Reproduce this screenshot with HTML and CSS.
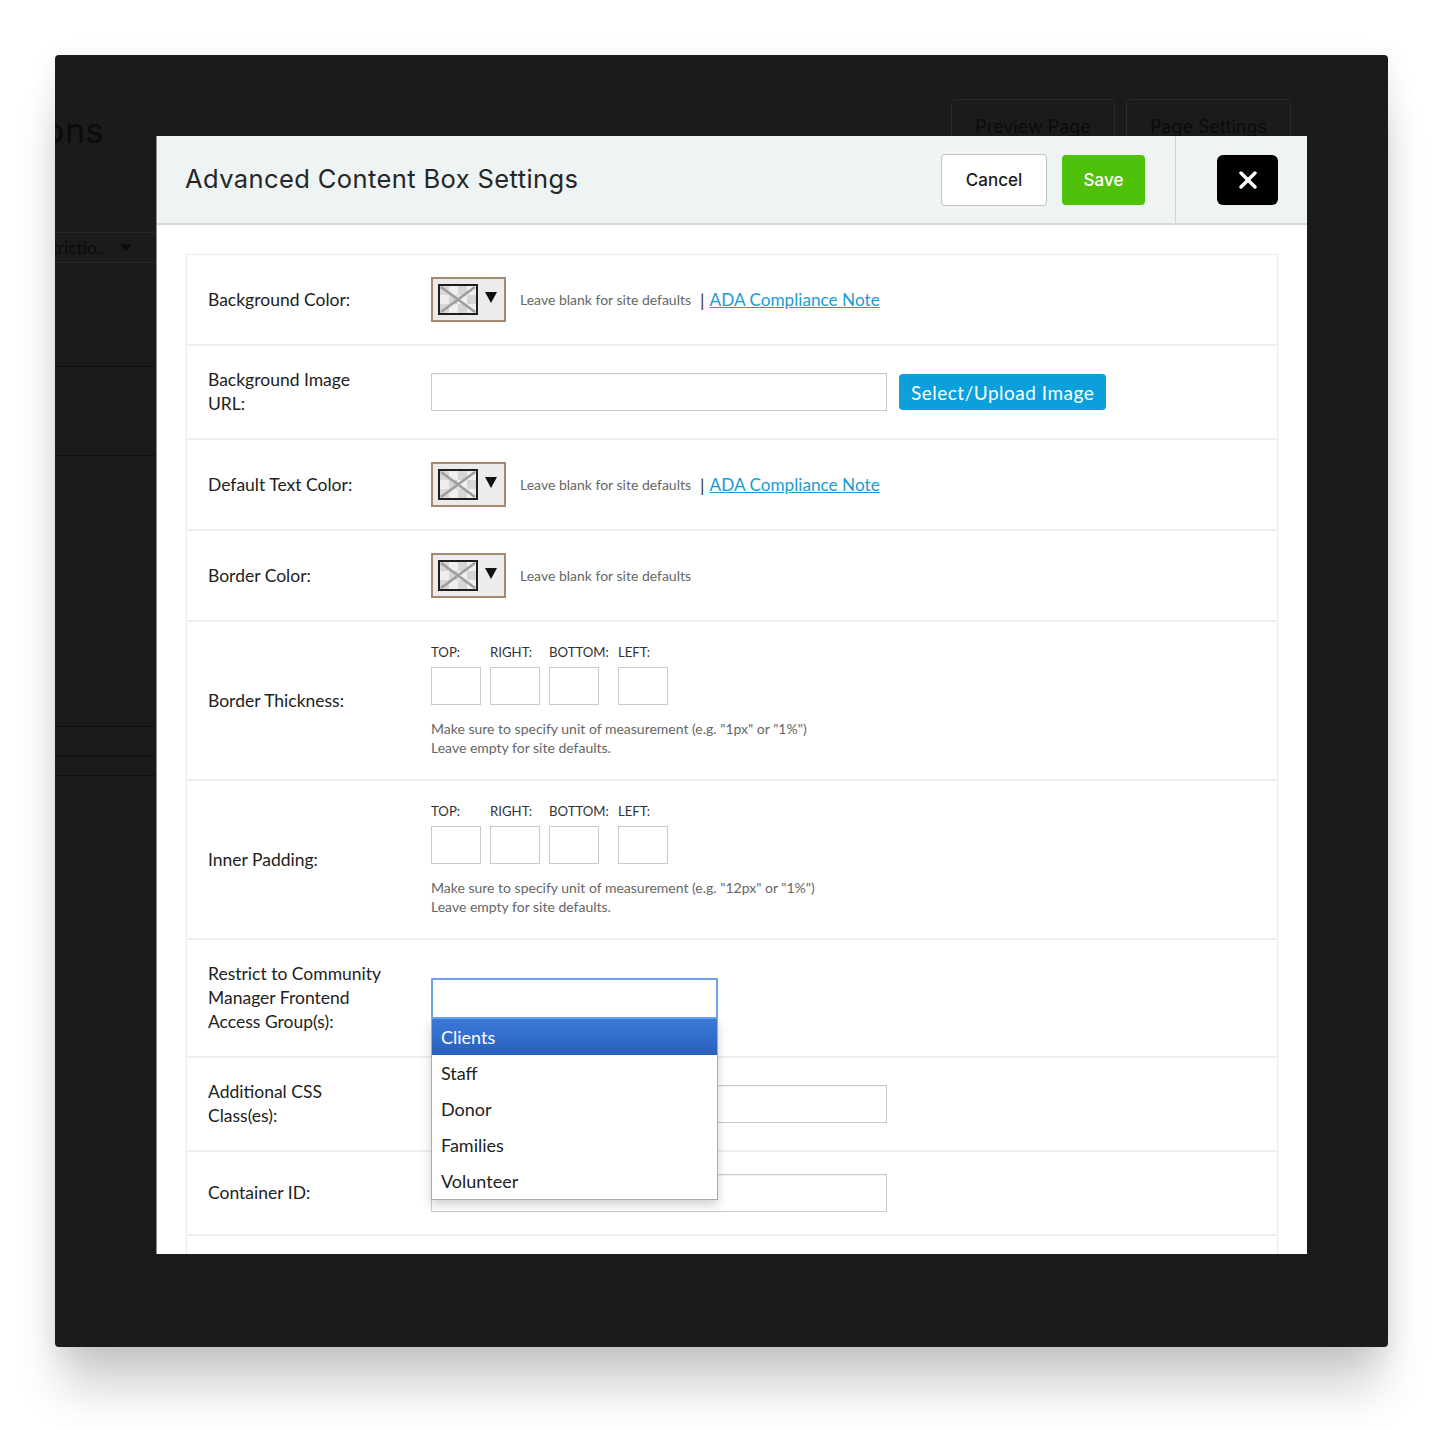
FILE: index.html
```html
<!DOCTYPE html>
<html lang="en">
<head>
    <meta charset="UTF-8">
    <meta name="viewport" content="width=device-width, initial-scale=1.0">
    <title>Advanced Content Box Settings</title>
    <link rel="stylesheet" href="styles.css">
</head>
<body>
    <div class="screen">
        <!-- page underneath the overlay -->
        <div class="bg-page">
            <div class="bg-top">
                <div class="bg-title">ons</div>
                <div class="bg-actions">
                    <span class="bg-btn">Preview Page</span>
                    <span class="bg-btn">Page Settings</span>
                </div>
            </div>
            <div class="bg-filter">
                <span class="bg-filter-text">trictio...</span>
                <span class="bg-caret"></span>
            </div>
            <div class="bg-row bg-row-1"></div>
            <div class="bg-row bg-row-2"></div>
            <div class="bg-row bg-row-3"></div>
            <div class="bg-row bg-row-4"></div>
            <div class="bg-row bg-row-5"></div>
        </div>

        <div class="modal">
            <div class="modal-header">
                <h1 class="modal-title">Advanced Content Box Settings</h1>
                <button class="btn btn-cancel">Cancel</button>
                <button class="btn btn-save">Save</button>
                <div class="header-divider"></div>
                <button class="btn-close" aria-label="Close">
                    <svg width="18" height="18" viewBox="0 0 18 18">
                        <path d="M2 2 L16 16 M16 2 L2 16" stroke="#fff" stroke-width="3.4" stroke-linecap="round"/>
                    </svg>
                </button>
            </div>

            <div class="modal-body">
                <div class="form-table">
                    <div class="form-row">
                        <div class="form-label">Background Color:</div>
                        <div class="form-field">
                            <span class="picker">
                                <span class="swatch">
                                    <svg width="36" height="27" viewBox="0 0 36 27">
                                        <rect width="36" height="27" fill="#efefef"/>
                                        <path d="M0 0h9v9H0z M18 0h9v9h-9z M9 9h9v9H9z M27 9h9v9h-9z M0 18h9v9H0z M18 18h9v9h-9z" fill="#d6d6d6"/>
                                        <path d="M1 1 L35 26 M35 1 L1 26" stroke="#9e9e9e" stroke-width="2.6"/>
                                    </svg>
                                </span>
                                <svg class="caret" width="12" height="12" viewBox="0 0 12 12"><path d="M0 1 H12 L6 12 Z" fill="#111"/></svg>
                            </span>
                            <span class="hint">Leave blank for site defaults</span>
                            <span class="pipe">|</span>
                            <a class="ada-link" href="#">ADA Compliance Note</a>
                        </div>
                    </div>

                    <div class="form-row">
                        <div class="form-label">Background Image<br>URL:</div>
                        <div class="form-field">
                            <input class="text-input" type="text">
                            <button class="btn-upload">Select/Upload Image</button>
                        </div>
                    </div>

                    <div class="form-row">
                        <div class="form-label">Default Text Color:</div>
                        <div class="form-field">
                            <span class="picker">
                                <span class="swatch">
                                    <svg width="36" height="27" viewBox="0 0 36 27">
                                        <rect width="36" height="27" fill="#efefef"/>
                                        <path d="M0 0h9v9H0z M18 0h9v9h-9z M9 9h9v9H9z M27 9h9v9h-9z M0 18h9v9H0z M18 18h9v9h-9z" fill="#d6d6d6"/>
                                        <path d="M1 1 L35 26 M35 1 L1 26" stroke="#9e9e9e" stroke-width="2.6"/>
                                    </svg>
                                </span>
                                <svg class="caret" width="12" height="12" viewBox="0 0 12 12"><path d="M0 1 H12 L6 12 Z" fill="#111"/></svg>
                            </span>
                            <span class="hint">Leave blank for site defaults</span>
                            <span class="pipe">|</span>
                            <a class="ada-link" href="#">ADA Compliance Note</a>
                        </div>
                    </div>

                    <div class="form-row">
                        <div class="form-label">Border Color:</div>
                        <div class="form-field">
                            <span class="picker">
                                <span class="swatch">
                                    <svg width="36" height="27" viewBox="0 0 36 27">
                                        <rect width="36" height="27" fill="#efefef"/>
                                        <path d="M0 0h9v9H0z M18 0h9v9h-9z M9 9h9v9H9z M27 9h9v9h-9z M0 18h9v9H0z M18 18h9v9h-9z" fill="#d6d6d6"/>
                                        <path d="M1 1 L35 26 M35 1 L1 26" stroke="#9e9e9e" stroke-width="2.6"/>
                                    </svg>
                                </span>
                                <svg class="caret" width="12" height="12" viewBox="0 0 12 12"><path d="M0 1 H12 L6 12 Z" fill="#111"/></svg>
                            </span>
                            <span class="hint">Leave blank for site defaults</span>
                        </div>
                    </div>

                    <div class="form-row">
                        <div class="form-label">Border Thickness:</div>
                        <div class="form-field sides">
                            <div class="side-group">
                                <label class="side"><span class="side-name">TOP:</span><input class="side-input" type="text"></label>
                                <label class="side"><span class="side-name">RIGHT:</span><input class="side-input" type="text"></label>
                                <label class="side"><span class="side-name">BOTTOM:</span><input class="side-input" type="text"></label>
                                <label class="side"><span class="side-name">LEFT:</span><input class="side-input" type="text"></label>
                            </div>
                            <p class="side-help">Make sure to specify unit of measurement (e.g. "1px" or "1%")<br>Leave empty for site defaults.</p>
                        </div>
                    </div>

                    <div class="form-row">
                        <div class="form-label">Inner Padding:</div>
                        <div class="form-field sides">
                            <div class="side-group">
                                <label class="side"><span class="side-name">TOP:</span><input class="side-input" type="text"></label>
                                <label class="side"><span class="side-name">RIGHT:</span><input class="side-input" type="text"></label>
                                <label class="side"><span class="side-name">BOTTOM:</span><input class="side-input" type="text"></label>
                                <label class="side"><span class="side-name">LEFT:</span><input class="side-input" type="text"></label>
                            </div>
                            <p class="side-help">Make sure to specify unit of measurement (e.g. "12px" or "1%")<br>Leave empty for site defaults.</p>
                        </div>
                    </div>

                    <div class="form-row">
                        <div class="form-label">Restrict to Community<br>Manager Frontend<br>Access Group(s):</div>
                        <div class="form-field">
                            <div class="multi-select">
                                <div class="multi-box"></div>
                                <ul class="multi-list">
                                    <li class="active">Clients</li>
                                    <li>Staff</li>
                                    <li>Donor</li>
                                    <li>Families</li>
                                    <li>Volunteer</li>
                                </ul>
                            </div>
                        </div>
                    </div>

                    <div class="form-row">
                        <div class="form-label">Additional CSS<br>Class(es):</div>
                        <div class="form-field">
                            <input class="text-input" type="text">
                        </div>
                    </div>

                    <div class="form-row">
                        <div class="form-label">Container ID:</div>
                        <div class="form-field">
                            <input class="text-input" type="text">
                        </div>
                    </div>

                    <div class="form-row">
                        <div class="form-label">&nbsp;</div>
                        <div class="form-field">
                            <input class="text-input" type="text">
                        </div>
                    </div>
                </div>
            </div>
        </div>
    </div>
</body>
</html>
```

FILE: styles.css
```css
* {
    margin: 0;
    padding: 0;
    box-sizing: border-box;
}

html,
body {
    min-height: 1430px;
}

body {
    font-family: Lato, 'Noto Sans', sans-serif;
    background-color: #fff;
    color: #222;
    padding: 55px 0 0 55px;
}

.screen {
    position: relative;
    width: 1333px;
    height: 1292px;
    background-color: #1b1b1b;
    border-radius: 4px;
    overflow: hidden;
    box-shadow: 0 48px 45px -8px rgba(0, 0, 0, 0.19), 0 6px 28px rgba(0, 0, 0, 0.09);
}

/* page under the overlay */
.bg-page {
    padding: 44px 97px 0 0;
    color: #0b0b0b;
    font-family: Inter, sans-serif;
}

.bg-top {
    display: flex;
    justify-content: space-between;
    align-items: flex-start;
}

.bg-title {
    font-size: 34px;
    line-height: 44px;
    margin: 10px 0 0 -11px;
    letter-spacing: 0.5px;
}

.bg-actions {
    display: flex;
    gap: 11px;
}

.bg-btn {
    display: flex;
    align-items: center;
    height: 54px;
    padding: 2px 23px 0;
    border: 1px solid #2b2b2b;
    border-radius: 5px;
    font-size: 18px;
    line-height: 54px;
}

.bg-filter {
    display: flex;
    align-items: center;
    height: 31px;
    margin-top: 79px;
    border-top: 1px solid #262626;
    border-bottom: 1px solid #262626;
    font-family: Lato, sans-serif;
    font-size: 17px;
}

.bg-filter-text {
    margin-left: -3px;
}

.bg-caret {
    width: 0;
    height: 0;
    margin-left: 11px;
    border-left: 6px solid transparent;
    border-right: 6px solid transparent;
    border-top: 7px solid #0b0b0b;
}

.bg-row {
    border-bottom: 1px solid #111;
}

.bg-row-1 { height: 104px; }
.bg-row-2 { height: 89px; }
.bg-row-3 { height: 271px; }
.bg-row-4 { height: 30px; }
.bg-row-5 { height: 19px; }

/* modal */
.modal {
    position: absolute;
    left: 101px;
    top: 81px;
    width: 1151px;
    height: 1118px;
    background-color: #fff;
    border-left: 1px solid #8d8d8d;
    overflow: hidden;
}

.modal-header {
    display: flex;
    align-items: center;
    height: 89px;
    padding-left: 28px;
    background-color: #eef4f4;
    border-bottom: 2px solid #d4d8d8;
}

.modal-title {
    flex: 1;
    font-family: Inter, sans-serif;
    font-weight: 400;
    font-size: 25.5px;
    color: #262626;
    letter-spacing: 0.4px;
    margin-top: -2px;
}

.btn {
    font-family: Inter, sans-serif;
    font-size: 17px;
    font-weight: 500;
    border-radius: 4px;
    cursor: pointer;
}

.btn-cancel {
    width: 106px;
    height: 52px;
    background-color: #fff;
    border: 1px solid #bfc3c3;
    color: #1b1b1b;
}

.btn-save {
    width: 83px;
    height: 50px;
    margin-left: 15px;
    background-color: #4fc10b;
    border: none;
    color: #fff;
}

.header-divider {
    align-self: stretch;
    width: 1px;
    margin-left: 30px;
    background-color: #cfd4d4;
}

.btn-close {
    display: flex;
    align-items: center;
    justify-content: center;
    width: 61px;
    height: 50px;
    margin: 0 29px 0 41px;
    background-color: #000;
    border: none;
    border-radius: 6px;
}

.modal-body {
    padding: 29px 29px 0 29px;
}

.form-table {
    border: 1px solid #ebebeb;
}

.form-row {
    position: relative;
    display: flex;
    align-items: center;
    padding: 22px 0;
    border-top: 2px solid #efefef;
}

.form-row:first-child {
    border-top: none;
}

.form-label {
    width: 244px;
    padding-left: 21px;
    font-size: 17.5px;
    line-height: 24px;
    color: #222;
    white-space: nowrap;
}

.form-field {
    display: flex;
    align-items: center;
}

/* colour picker */
.picker {
    display: flex;
    align-items: center;
    width: 75px;
    height: 45px;
    padding-left: 5px;
    background-color: #ececec;
    border: 2px solid #a3896f;
}

.swatch {
    display: block;
    width: 40px;
    height: 31px;
    border: 2px solid #1e1e1e;
}

.swatch svg {
    display: block;
}

.caret {
    margin: -5px 0 0 7px;
}

.hint {
    margin-left: 14px;
    font-size: 14px;
    color: #666;
}

.pipe {
    margin-left: 9px;
    font-size: 18px;
    color: #333;
}

.ada-link {
    margin-left: 5px;
    font-size: 17.2px;
    color: #1a9bd7;
    text-decoration: underline;
}

.text-input {
    width: 456px;
    height: 38px;
    border: 1px solid #cacaca;
    box-shadow: inset 0 1px 1px rgba(0, 0, 0, 0.06);
    background-color: #fff;
}

.btn-upload {
    height: 36px;
    margin-left: 12px;
    padding: 0 12px;
    background-color: #0b9fdc;
    border: none;
    border-radius: 4px;
    color: #fff;
    font-family: Lato, sans-serif;
    font-size: 19px;
    letter-spacing: 0.5px;
}

/* border / padding sides */
.sides {
    display: block;
}

.side-group {
    display: flex;
    gap: 9px;
}

.side {
    display: flex;
    flex-direction: column;
}

.side-name {
    font-size: 13.2px;
    line-height: 16px;
    color: #333;
    margin-bottom: 7px;
}

.side-input {
    width: 50px;
    height: 38px;
    border: 1px solid #cacaca;
    background-color: #fff;
}

.side-help {
    margin-top: 14px;
    font-size: 14px;
    line-height: 19px;
    color: #666;
}

/* open multi select */
.multi-select {
    position: relative;
    width: 287px;
}

.multi-box {
    height: 41px;
    border: 2px solid #6aa3ea;
    border-radius: 1px;
    background-color: #fff;
}

.multi-list {
    position: absolute;
    top: 41px;
    left: 0;
    width: 287px;
    list-style: none;
    background-color: #fff;
    border: 1px solid #a9a9a9;
    border-top: none;
    box-shadow: 0 5px 10px rgba(0, 0, 0, 0.18);
    z-index: 10;
}

.multi-list li {
    height: 36px;
    padding-left: 9px;
    font-size: 18px;
    line-height: 36px;
    color: #222;
}

.multi-list li.active {
    background: linear-gradient(#3a7ad9, #2b5fbf);
    color: #fff;
}
```
